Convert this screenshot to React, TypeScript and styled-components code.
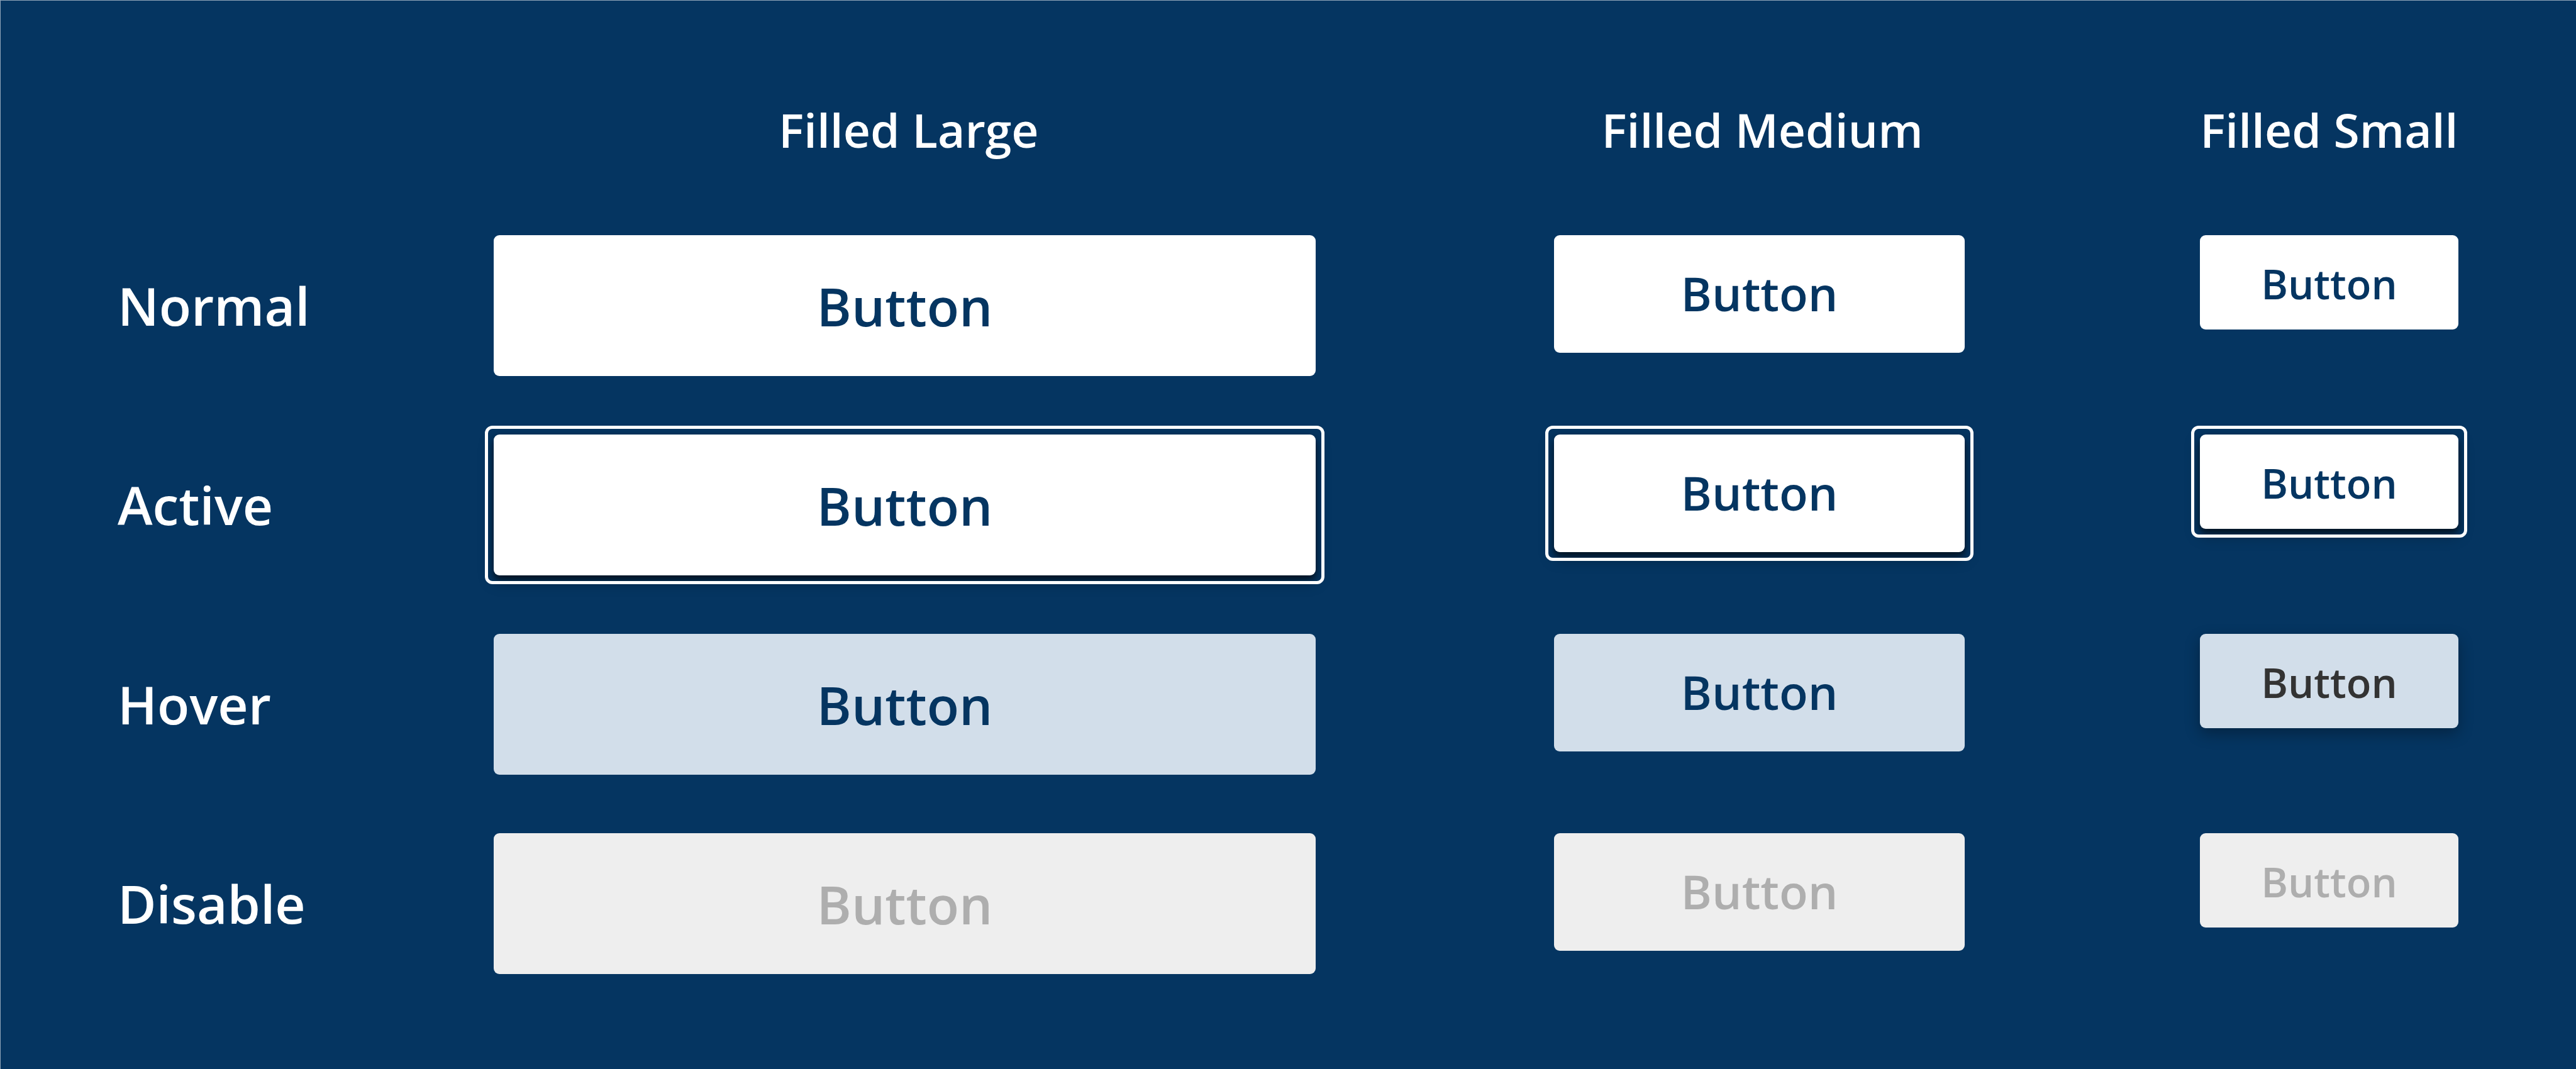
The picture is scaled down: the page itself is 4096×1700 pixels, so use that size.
import React from "react";
import styled, { createGlobalStyle, css } from "styled-components";

type Size = "large" | "medium" | "small";
type State = "normal" | "active" | "hover" | "disabled";

const navy = "#053561";

const Global = createGlobalStyle`
  * { box-sizing: border-box; }
  body { margin: 0; background: ${navy}; font-family: "Open Sans", "Noto Sans", sans-serif; }
`;

const sizes = {
  large: { height: 224, font: 84, padding: "0" },
  medium: { height: 187, font: 75, padding: "0 0 3px" },
  small: { height: 150, font: 65, padding: "4px 0 0" },
};

const Board = styled.main`
  min-height: 100vh;
  background: ${navy};
  border-top: 1px solid #90a5b9;
  border-left: 1px solid #90a5b9;
  padding: 149px 187px 146px 186px;
`;

const Header = styled.header`
  display: grid;
  grid-template-columns: 604fr 1307fr 377fr 653fr 369fr 411fr;
  height: 224px;
`;

const Grid = styled.div`
  display: grid;
  grid-template-columns: 598fr 1307fr 379fr 653fr 374fr 411fr;
  row-gap: 93px;
`;

const ColumnTitle = styled.h2<{ $column: number }>`
  grid-column: ${(p) => p.$column};
  margin: 0;
  font-size: 75px;
  line-height: 112px;
  font-weight: 600;
  color: #fff;
  text-align: center;
  white-space: nowrap;
`;

const RowTitle = styled.h3`
  grid-column: 1;
  margin: 0;
  font-size: 84px;
  line-height: 224px;
  font-weight: 600;
  color: #fff;
`;

const activeStyle = css`
  box-shadow: 0 9px 23px rgba(0, 0, 0, 0.35), 0 7px 9px rgba(0, 0, 0, 0.45);

  &::after {
    content: "";
    position: absolute;
    inset: -14px;
    border: 5px solid #fff;
    border-radius: 12px;
  }
`;

const smallHoverStyle = css`
  box-shadow: 0 9px 23px rgba(0, 0, 0, 0.3);
  color: #333;
`;

const FilledButton = styled.button<{ $size: Size; $state: State; $column: number }>`
  grid-column: ${(p) => p.$column};
  position: relative;
  height: ${(p) => sizes[p.$size].height}px;
  width: 100%;
  padding: ${(p) => sizes[p.$size].padding};
  border: 0;
  border-radius: 9px;
  font-family: inherit;
  font-weight: 600;
  font-size: ${(p) => sizes[p.$size].font}px;
  background: ${(p) => (p.$state === "hover" ? "#d2deea" : p.$state === "disabled" ? "#eee" : "#fff")};
  color: ${(p) => (p.$state === "disabled" ? "#aeaeae" : navy)};
  ${(p) => p.$state === "active" && activeStyle}
  ${(p) => p.$state === "hover" && p.$size === "small" && smallHoverStyle}
`;

const columns: { size: Size; title: string; column: number }[] = [
  { size: "large", title: "Filled Large", column: 2 },
  { size: "medium", title: "Filled Medium", column: 4 },
  { size: "small", title: "Filled Small", column: 6 },
];
const rows: { state: State; title: string }[] = [
  { state: "normal", title: "Normal" },
  { state: "active", title: "Active" },
  { state: "hover", title: "Hover" },
  { state: "disabled", title: "Disable" },
];

export default function App() {
  return (
    <Board>
      <Global />
      <Header>
        {columns.map((c) => (
          <ColumnTitle key={c.size} $column={c.column}>{c.title}</ColumnTitle>
        ))}
      </Header>
      <Grid>
        {rows.map((r) => (
          <React.Fragment key={r.state}>
            <RowTitle>{r.title}</RowTitle>
            {columns.map((c) => (
              <FilledButton key={c.size} $size={c.size} $state={r.state} $column={c.column} disabled={r.state === "disabled"}>
                Button
              </FilledButton>
            ))}
          </React.Fragment>
        ))}
      </Grid>
    </Board>
  );
}
